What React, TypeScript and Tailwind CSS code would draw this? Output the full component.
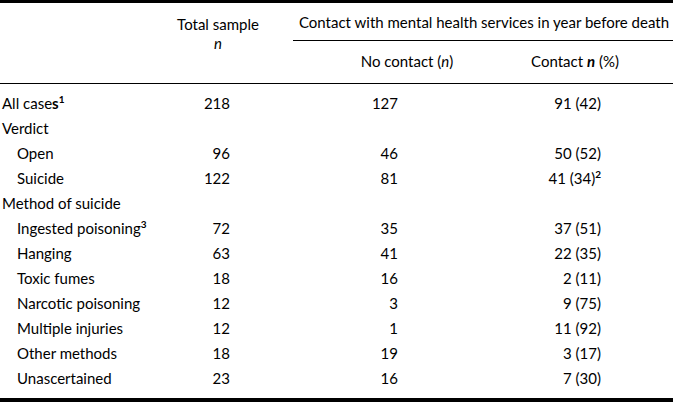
import React from "react";

type Row = {
  label: React.ReactNode;
  indent?: boolean;
  total?: React.ReactNode;
  no?: React.ReactNode;
  contact?: React.ReactNode;
};

const Sup = ({ children }: { children: React.ReactNode }) => (
  <sup className="text-[10px] font-bold relative -top-[6px] align-baseline">{children}</sup>
);

const rows: Row[] = [
  {
    label: (
      <>
        All case<span className="font-bold">s</span>
        <Sup>1</Sup>
      </>
    ),
    total: "218",
    no: "127",
    contact: "91 (42)",
  },
  { label: "Verdict" },
  { label: "Open", indent: true, total: "96", no: "46", contact: "50 (52)" },
  {
    label: "Suicide",
    indent: true,
    total: "122",
    no: "81",
    contact: (
      <>
        41 (34)<Sup>2</Sup>
      </>
    ),
  },
  { label: "Method of suicide" },
  {
    label: (
      <>
        Ingested poisoning
        <Sup>3</Sup>
      </>
    ),
    indent: true,
    total: "72",
    no: "35",
    contact: "37 (51)",
  },
  { label: "Hanging", indent: true, total: "63", no: "41", contact: "22 (35)" },
  { label: "Toxic fumes", indent: true, total: "18", no: "16", contact: "2 (11)" },
  { label: "Narcotic poisoning", indent: true, total: "12", no: "3", contact: "9 (75)" },
  { label: "Multiple injuries", indent: true, total: "12", no: "1", contact: "11 (92)" },
  { label: "Other methods", indent: true, total: "18", no: "19", contact: "3 (17)" },
  { label: "Unascertained", indent: true, total: "23", no: "16", contact: "7 (30)" },
];

const cols = "grid grid-cols-[170px_123px_200px_180px]";

export default function App() {
  return (
    <div
      className="w-[673px] h-[402px] bg-white text-black text-[15px] leading-none overflow-hidden"
      style={{ fontFamily: "Lato, 'Open Sans', sans-serif" }}
    >
      <div className="border-t-[3px] border-black">
        {/* header */}
        <div className={`${cols} h-[81px] border-b border-black`}>
          <div />
          <div className="flex flex-col items-center pr-[27px] pt-[14px]">
            <span>Total sample</span>
            <span className="italic mt-[4px]">n</span>
          </div>
          <div className="col-span-2 flex flex-col">
            <div className="h-[38px] border-b border-black flex items-center justify-center pl-[2px] pt-[2px]">
              Contact with mental health services in year before death
            </div>
            <div className="grid grid-cols-[200px_180px] flex-1">
              <div className="flex items-center justify-center pl-[28px] pb-[1px]">
                No contact (<span className="italic">n</span>)
              </div>
              <div className="flex items-center justify-center pr-[16px] pb-[1px]">
                Contact&nbsp;<span className="italic font-bold">n</span>&nbsp;(%)
              </div>
            </div>
          </div>
        </div>
        {/* body */}
        <div className="pt-[7px] pb-[7px] border-b-4 border-black">
          {rows.map((r, i) => (
            <div key={i} className={`${cols} h-[25px] items-center`}>
              <div className={r.indent ? "pl-[17px]" : "pl-[2px]"}>{r.label}</div>
              <div className="text-right pr-[63px]">{r.total}</div>
              <div className="text-right pr-[95px]">{r.no}</div>
              <div className="text-right pr-[72px]">{r.contact}</div>
            </div>
          ))}
        </div>
      </div>
    </div>
  );
}
